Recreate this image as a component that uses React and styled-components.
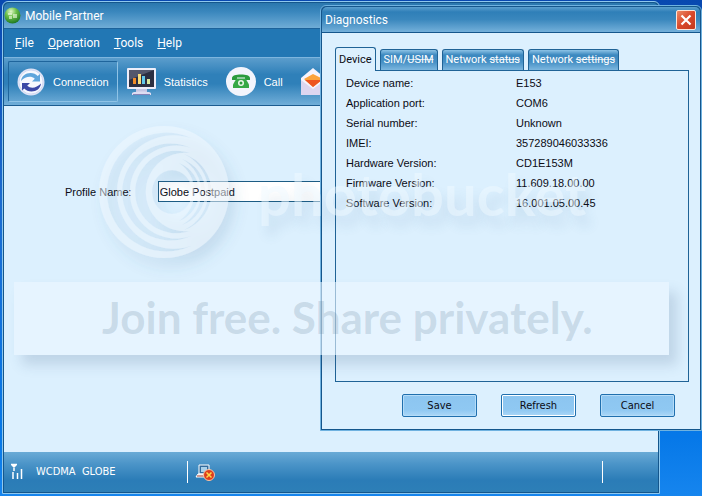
import React, { useState } from "react";
import styled, { createGlobalStyle } from "styled-components";

const GlobalStyle = createGlobalStyle`
  * {
    box-sizing: border-box;
  }

  body {
    margin: 0;
    background: #fff;
  }

  button, input {
    font-family: inherit;
    font-size: inherit;
  }
`;

const segoe = `Roboto, "Open Sans", sans-serif`;
const tahoma = `"DejaVu Sans Condensed", "DejaVu Sans", sans-serif`;
const arial = `"Liberation Sans", Arial, sans-serif`;

const Desktop = styled.div`
  position: relative;
  height: calc(100vh - 4px);
  min-height: 440px;
  overflow: hidden;
  background: linear-gradient(180deg, #0848b0 0%, #1c6cd0 40%, #0678e8 88%, #1685ee 100%);
  font-family: ${arial};
  font-size: 11px;
  color: #0b0b14;
`;

// Main window

const MainWindow = styled.main`
  position: absolute;
  top: 1px;
  left: 2px;
  right: 42px;
  bottom: 2px;
  display: flex;
  flex-direction: column;
  border: 1px solid #8ec8ee;
  border-radius: 6px 6px 0 0;
  padding: 1px;
  background: #14568c;
`;

const TitleBar = styled.header`
  display: flex;
  align-items: center;
  gap: 4px;
  height: 25px;
  flex: none;
  border-radius: 5px 5px 0 0;
  background: linear-gradient(180deg, #2a77ae 0%, #3a87bd 35%, #6facd6 100%);
  color: #fff;
`;

const Title = styled.h1`
  margin: 0;
  font: 12px/16px ${segoe};
`;

const MenuBar = styled.nav`
  display: flex;
  align-items: center;
  gap: 14px;
  height: 29px;
  flex: none;
  padding-left: 11px;
  background: #2277b4;
  border-top: 1px solid #1c629a;
`;

const MenuItem = styled.button`
  border: none;
  padding: 0;
  background: none;
  color: #fff;
  font: 12px/16px ${segoe};

  &::first-letter {
    text-decoration: underline;
  }
`;

const Toolbar = styled.div`
  display: flex;
  align-items: center;
  height: 49px;
  flex: none;
  padding: 0 4px;
  overflow: hidden;
  border-top: 1px solid #7db5de;
  border-bottom: 1px solid #1c5c90;
  background: linear-gradient(180deg, #5b9dcc 0%, #2f80b9 35%, #2f80b9 55%, #71aed8 100%);
`;

const ToolButton = styled.button`
  display: flex;
  align-items: center;
  gap: 8px;
  height: 41px;
  flex: none;
  padding: 0 8px;
  border: 1px solid ${props => props.$active ? "#8fc3e6" : "transparent"};
  border-top-color: ${props => props.$active ? "#1f659c" : "transparent"};
  border-left-color: ${props => props.$active ? "#1f659c" : "transparent"};
  border-radius: 2px;
  background: none;
  color: #fff;
  font-size: 11px;
  line-height: 16px;
`;

const Content = styled.section`
  flex: 1;
  padding: 75px 61px 0;
  background: #dcf0fe;
`;

const ProfileRow = styled.div`
  display: flex;
  align-items: center;
  gap: 26px;
`;

const ProfileInput = styled.input`
  flex: 1;
  height: 21px;
  padding: 0 1px;
  border: 1px solid #1c5c84;
  border-radius: 0;
  background: #fff;
  color: inherit;
  outline: none;
`;

const StatusBar = styled.footer`
  display: flex;
  align-items: center;
  height: 40px;
  flex: none;
  padding: 0 48px 0 6px;
  background: linear-gradient(180deg, #6aabd6 0%, #4b94c8 30%, #2b7cb7 70%, #2d7fb7 100%);
  color: #fff;
  font: 11px/16px ${tahoma};
`;

const NetworkName = styled.span`
  flex: none;
  width: 163px;
  padding-left: 12px;
`;

const Divider = styled.span`
  width: 1px;
  height: 22px;
  margin-right: 7px;
  background: #fff;
`;

const Spacer = styled.span`
  flex: 1;
`;

// Diagnostics dialog

const Dialog = styled.section`
  position: absolute;
  top: 5px;
  right: 0;
  width: 382px;
  padding: 1px;
  border: 1px solid #6fb2e0;
  border-radius: 6px 6px 0 0;
  background: #14568c;
`;

const DialogTitleBar = styled.header`
  display: flex;
  align-items: center;
  justify-content: space-between;
  height: 25px;
  padding: 0 4px 0 3px;
  border-radius: 5px 5px 0 0;
  background: linear-gradient(180deg, #5b9fce 0%, #2f7fb8 20%, #3a87bd 50%, #74b0da 100%);
  color: #fff;
`;

const CloseButton = styled.button`
  display: flex;
  align-items: center;
  justify-content: center;
  width: 20px;
  height: 20px;
  padding: 0;
  border: 1px solid #fbe6dc;
  border-radius: 2px;
  background: linear-gradient(135deg, #ec8a66 0%, #d9482a 50%, #c43a1c 100%);
`;

const DialogBody = styled.div`
  margin-top: 1px;
  padding: 14px 11px 12px 13px;
  background: #dcf0fe;
`;

const TabList = styled.div`
  display: flex;
  align-items: flex-end;
  gap: 4px;
`;

const Tab = styled.button`
  position: relative;
  height: ${props => props.$active ? 24 : 21}px;
  flex: none;
  margin-bottom: ${props => props.$active ? -1 : 0}px;
  padding: 0 3px;
  border: 1px solid #1f6396;
  border-bottom: none;
  border-radius: 3px 3px 0 0;
  background: ${props => props.$active
    ? "#dcf0fe"
    : "linear-gradient(180deg, #8dc3e6 0%, #3b88bf 25%, #4690c5 60%, #7cb7df 100%)"};
  color: ${props => props.$active ? "#0b0b14" : "#fff"};
  font: 11px/16px ${segoe};

  s {
    text-decoration-color: rgba(255, 255, 255, 0.7);
  }
`;

const TabPanel = styled.div`
  height: 312px;
  padding: 2px 10px;
  border: 1px solid #1f6396;
`;

const InfoTable = styled.table`
  width: 100%;
  border-collapse: collapse;
  table-layout: fixed;

  th, td {
    height: 20px;
    padding: 0;
    font-weight: normal;
    line-height: 16px;
    text-align: left;
  }

  th {
    width: 170px;
  }
`;

const ButtonRow = styled.div`
  display: flex;
  justify-content: flex-end;
  gap: 24px;
  padding: 12px 14px 0 0;
`;

const DialogButton = styled.button`
  width: 75px;
  height: 23px;
  padding: 0;
  border: 1px solid #1f6fae;
  border-radius: 2px;
  box-shadow: inset 0 0 0 1px ${props => props.$primary ? "#fff" : "#b5dcf8"};
  background: linear-gradient(180deg, #8cc5f0 0%, #8fc8f2 70%, #abd7f7 100%);
  color: #0b0b14;
  font: 11px/16px ${tahoma};
`;

// Watermark lying over both windows

const Watermark = styled.div`
  position: absolute;
  inset: 0;
  display: flex;
  flex-direction: column;
  align-items: flex-start;
  padding: 122px 33px 0 14px;
  pointer-events: none;
`;

const Brand = styled.div`
  display: flex;
  align-items: center;
  gap: 20px;
  height: 160px;
  padding: 0 0 16px 82px;
  color: rgba(240, 249, 255, 0.5);
  font: 700 58px/64px "Lato", sans-serif;
  text-shadow: 6px 10px 12px rgba(60, 110, 150, 0.12);
`;

const Banner = styled.div`
  align-self: stretch;
  padding: 9px 0 12px 88px;
  background: rgba(236, 247, 255, 0.6);
  box-shadow: 8px 10px 12px rgba(60, 90, 130, 0.18);
  color: rgba(80, 115, 140, 0.2);
  font: 700 44px/52px "Lato", sans-serif;
  white-space: nowrap;
`;

const GlobeIcon = () => (
  <svg width="17" height="17" viewBox="0 0 17 17" aria-hidden="true">
    <defs>
      <radialGradient id="orb" cx="40%" cy="25%" r="75%">
        <stop offset="0" stopColor="#e2f8c8" />
        <stop offset="0.45" stopColor="#6cc04a" />
        <stop offset="1" stopColor="#1f7a22" />
      </radialGradient>
    </defs>
    <circle cx="8.5" cy="8.5" r="8" fill="url(#orb)" />
    <path d="M4 6h4v2H4zM9 7h4v4H9zM5 9h3v3H5z" fill="#f2fbe6" opacity="0.6" />
  </svg>
);

const ConnectionIcon = () => (
  <svg width="28" height="28" viewBox="0 0 28 28" aria-hidden="true">
    <circle cx="14" cy="14" r="13.5" fill="#dfe3f6" />
    <circle cx="14" cy="14" r="12" fill="#f7f8fe" stroke="#d3daf3" />
    <path d="M4 13C4.500 8 8.500 5 13.500 5c3 0 5.500 1 7.200 3l2.300-2v7.500h-8l2.800-2.700C14 7.500 8.500 8.500 4 13z" fill="#5fa5dc" />
    <path d="M24 15.500c-.5 5-4.500 8-9.500 8-3 0-5.500-1-7.200-3L5 22.500V15h8l-2.800 2.700c3.800 3.300 9.300 2.300 13.800-2.200z" fill="#3c48a6" />
  </svg>
);

const StatisticsIcon = () => (
  <svg width="29" height="28" viewBox="0 0 29 28" aria-hidden="true">
    <rect width="29" height="21" rx="1" fill="#eeeefa" />
    <rect x="2" y="2" width="25" height="17" fill="#2c2f42" />
    <path d="M2 2h25L2 12z" fill="#53576c" />
    <rect x="6" y="10" width="3" height="6" fill="#f08c28" />
    <rect x="11" y="6" width="3" height="10" fill="#f7dc7c" />
    <rect x="15" y="8" width="3" height="8" fill="#62c8ea" />
    <rect x="20" y="11" width="3" height="5" fill="#d8e9a0" />
    <path d="M9 21h11v3H9z" fill="#c6c6e4" />
    <path d="M5 25c2-2 17-2 19 0v2H5z" fill="#dedcf2" />
    <path d="M6 26h17v1H6z" fill="#8583b8" />
  </svg>
);

const CallIcon = () => (
  <svg width="30" height="29" viewBox="0 0 30 29" aria-hidden="true">
    <ellipse cx="15" cy="14.500" rx="15" ry="14.500" fill="#f3f4fc" />
    <path d="M6 13v-2c0-2.500 4-3.500 9-3.500s9 1 9 3.500v2h-5v-2.500h-8V13z" fill="#2b9b3c" />
    <path d="M10.500 11.500h9l3.500 6V21H7v-3.500z" fill="#36a846" />
    <circle cx="15" cy="16" r="3" fill="#eaf7ea" />
    <circle cx="15" cy="16" r="1.500" fill="#2b9b3c" />
  </svg>
);

const MessageIcon = () => (
  <svg width="30" height="28" viewBox="0 0 30 28" aria-hidden="true">
    <path d="M0 10L12 0l12 10v17H0z" fill="#f6f3fc" />
    <path d="M0 12l12 9 12-9v15H0z" fill="#ddd6f0" />
    <path d="M3 11l9-5 10 5-10 8z" fill="#fba23c" />
    <path d="M4 12h17l-9 7z" fill="#ee5420" />
  </svg>
);

const SignalIcon = () => (
  <svg width="14" height="18" viewBox="0 0 14 18" aria-hidden="true">
    <path d="M1 1.500h6M2 2l2 2 2-2M4 2v6M3 9v7M7.500 10v6M11.500 6v10" fill="none" stroke="#fff" strokeWidth="1.500" />
  </svg>
);

const OfflineIcon = () => (
  <svg width="20" height="17" viewBox="0 0 20 17" aria-hidden="true">
    <path d="M4 1h10v9H4z" fill="#326b9d" stroke="#fff" />
    <path d="M6 3h6v5H6z" fill="#a9d0ea" />
    <path d="M3 10h11v3H1z" fill="#f3e7e5" stroke="#fff" />
    <path d="M2 12h9" stroke="#a5483c" />
    <circle cx="14" cy="11" r="5.500" fill="#dd3d1d" stroke="#f7c6a8" />
    <path d="M11.500 8.500l5 5M16.500 8.500l-5 5" stroke="#ffd84a" strokeWidth="1.500" />
  </svg>
);

const CloseIcon = () => (
  <svg width="12" height="12" viewBox="0 0 12 12" aria-hidden="true">
    <path d="M1.500 1.500l9 9M10.500 1.500l-9 9" stroke="#fff" strokeWidth="2.200" />
  </svg>
);

// Disc with crescents cut out of it: three open to the right, three to the left
const BucketLogo = () => (
  <svg width="142" height="144" viewBox="0 0 142 144" overflow="visible" aria-hidden="true">
    <defs>
      <filter id="logoShadow" x="-20%" y="-20%" width="150%" height="150%">
        <feDropShadow dx="6" dy="9" stdDeviation="7" floodColor="#3c6e96" floodOpacity="0.3" />
      </filter>
    </defs>
    <path
      filter="url(#logoShadow)"
      fill="#f1f9ff"
      fillOpacity="0.5"
      fillRule="evenodd"
      d="M3 70a65 66 0 1 0 130 0a65 66 0 1 0 -130 0z
        M95 16A59.400 59.400 0 1 0 95 124A56.700 56.700 0 1 1 95 16z
        M95 26A48.500 48.500 0 1 0 95 114A46.400 46.400 0 1 1 95 26z
        M94 31A41.300 41.300 0 1 0 94 109A39.300 39.300 0 1 1 94 31z
        M88 32A40 40 0 0 1 88 108A42 42 0 0 0 88 32z
        M86 37A35 35 0 0 1 86 103A38 38 0 0 0 86 37z
        M83 41A31 31 0 0 1 83 99A35 35 0 0 0 83 41z
        M56 70a20 22 0 1 0 40 0a20 22 0 1 0 -40 0z"
    />
  </svg>
);

const menus = ["File", "Operation", "Tools", "Help"];

const tabs = [
  { id: "device", name: "Device" },
  { id: "sim", name: "SIM/", struck: "USIM" },
  { id: "status", name: "Network ", struck: "status" },
  { id: "settings", name: "Network ", struck: "settings" },
];

const deviceInfo = [
  ["Device name:", "E153"],
  ["Application port:", "COM6"],
  ["Serial number:", "Unknown"],
  ["IMEI:", "357289046033336"],
  ["Hardware Version:", "CD1E153M"],
  ["Firmware Version:", "11.609.18.00.00"],
  ["Software Version:", "16.001.05.00.45"],
];

function Diagnostics() {
  const [activeTab, setActiveTab] = useState("device");

  return (
    <Dialog role="dialog" aria-labelledby="diagnostics-title">
      <DialogTitleBar>
        <Title as="h2" id="diagnostics-title">Diagnostics</Title>
        <CloseButton aria-label="Close"><CloseIcon /></CloseButton>
      </DialogTitleBar>
      <DialogBody>
        <TabList role="tablist">
          {tabs.map((tab) => (
            <Tab
              key={tab.id}
              role="tab"
              aria-selected={tab.id === activeTab}
              $active={tab.id === activeTab}
              onClick={() => setActiveTab(tab.id)}
            >
              {tab.name}{tab.struck && <s>{tab.struck}</s>}
            </Tab>
          ))}
        </TabList>
        <TabPanel role="tabpanel">
          <InfoTable>
            <tbody>
              {deviceInfo.map(([label, value]) => (
                <tr key={label}>
                  <th scope="row">{label}</th>
                  <td>{value}</td>
                </tr>
              ))}
            </tbody>
          </InfoTable>
        </TabPanel>
        <ButtonRow>
          <DialogButton>Save</DialogButton>
          <DialogButton $primary>Refresh</DialogButton>
          <DialogButton>Cancel</DialogButton>
        </ButtonRow>
      </DialogBody>
    </Dialog>
  );
}

function App() {
  const [profile, setProfile] = useState("Globe Postpaid");

  return (
    <>
      <GlobalStyle />
      <Desktop>
        <MainWindow>
          <TitleBar>
            <GlobeIcon />
            <Title>Mobile Partner</Title>
          </TitleBar>
          <MenuBar>
            {menus.map((menu) => <MenuItem key={menu}>{menu}</MenuItem>)}
          </MenuBar>
          <Toolbar>
            <ToolButton $active><ConnectionIcon />Connection</ToolButton>
            <ToolButton><StatisticsIcon />Statistics</ToolButton>
            <ToolButton><CallIcon />Call</ToolButton>
            <ToolButton aria-label="Text"><MessageIcon /></ToolButton>
          </Toolbar>
          <Content>
            <ProfileRow>
              <label htmlFor="profile">Profile Name:</label>
              <ProfileInput id="profile" value={profile} onChange={(e) => setProfile(e.target.value)} />
            </ProfileRow>
          </Content>
          <StatusBar>
            <SignalIcon />
            <NetworkName>WCDMA&nbsp; GLOBE</NetworkName>
            <Divider />
            <OfflineIcon />
            <Spacer />
            <Divider />
          </StatusBar>
        </MainWindow>
        <Diagnostics />
        <Watermark>
          <Brand><BucketLogo />photobucket</Brand>
          <Banner>Join free. Share privately.</Banner>
        </Watermark>
      </Desktop>
    </>
  );
}

export default App;
